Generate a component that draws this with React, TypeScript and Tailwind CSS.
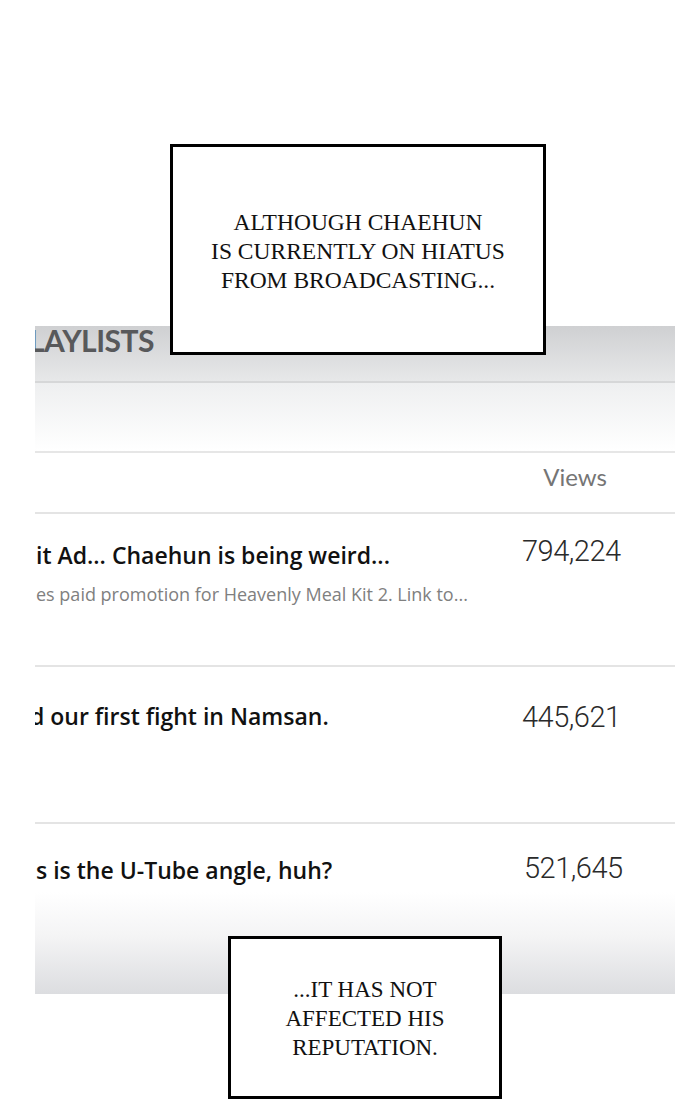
import React from "react";

const sans = { fontFamily: "'Open Sans', Lato, sans-serif" };
const roboto = { fontFamily: "Roboto, sans-serif" };
const serif = { fontFamily: "'Liberation Serif', 'Times New Roman', serif" };

export default function App() {
  return (
    <div className="relative w-[700px] h-[1120px] bg-white overflow-hidden" style={sans}>
      {/* Panel */}
      <div className="ml-[35px] mt-[326px] w-[640px] flex flex-col overflow-hidden">
        {/* Header */}
        <div className="h-[55px] bg-[linear-gradient(to_bottom,#cfd0d2,#e7e8e9)] overflow-hidden">
          <div
            className="ml-[-6px] mt-[-3px] text-[30px] leading-[34px] font-bold text-[#58595b] tracking-[-0.5px]"
            style={{ fontFamily: "Lato, sans-serif" }}
          >
            LAYLISTS
          </div>
        </div>
        <div className="h-[2px] bg-[#d6d7d8]" />
        <div className="h-[68px] bg-[linear-gradient(to_bottom,#eeeff0,#ffffff)]" />
        <div className="h-[2px] bg-[#e6e6e6]" />
        {/* Views header */}
        <div className="h-[59px] flex items-center justify-end pr-[68px]">
          <span className="text-[24px] leading-none text-[#757575] pb-[12px]" style={{ fontFamily: "Lato, sans-serif" }}>
            Views
          </span>
        </div>
        <div className="h-[2px] bg-[#e4e4e4]" />
        {/* Row 1 */}
        <div className="h-[151px] flex overflow-hidden">
          <div className="flex-1 pt-[26px] overflow-hidden">
            <div className="text-[23px] leading-[30px] font-semibold text-[#111] ml-[1px]">
              it Ad... Chaehun is being weird...
            </div>
            <div className="mt-[12px] text-[18px] leading-[24px] text-[#808080] ml-[1px]">
              es paid promotion for Heavenly Meal Kit 2. Link to...
            </div>
          </div>
          <div className="w-[153px] pt-[19px] text-[29px] leading-[36px] font-light text-[#2a2a2a] tracking-[-0.5px]" style={roboto}>
            794,224
          </div>
        </div>
        <div className="h-[2px] bg-[#e4e4e4]" />
        {/* Row 2 */}
        <div className="h-[155px] flex overflow-hidden">
          <div className="flex-1 pt-[34px] overflow-hidden">
            <div className="text-[23px] leading-[30px] font-semibold text-[#111] ml-[-5px]">
              d our first fight in Namsan.
            </div>
          </div>
          <div className="w-[153px] pt-[32px] text-[29px] leading-[36px] font-light text-[#2a2a2a] tracking-[-0.5px]" style={roboto}>
            445,621
          </div>
        </div>
        <div className="h-[2px] bg-[#e4e4e4]" />
        {/* Row 3 */}
        <div className="h-[170px] flex bg-[linear-gradient(to_bottom,#ffffff_0%,#ffffff_40%,#f4f4f5_66%,#dcdde0_100%)]">
          <div className="flex-1 pt-[31px] overflow-hidden">
            <div className="text-[23px] leading-[30px] font-semibold text-[#111] ml-[1px]">
              s is the U-Tube angle, huh?
            </div>
          </div>
          <div className="w-[151px] pt-[26px] text-[29px] leading-[36px] font-light text-[#2a2a2a] tracking-[-0.5px]" style={roboto}>
            521,645
          </div>
        </div>
      </div>

      {/* Caption box 1 */}
      <div
        className="absolute left-[170px] top-[144px] w-[376px] h-[211px] border-[3px] border-black bg-white flex flex-col items-center justify-center text-center text-[23.5px] leading-[29px] text-[#111]"
        style={serif}
      >
        <div className="pt-[4px]">ALTHOUGH CHAEHUN</div>
        <div>IS CURRENTLY ON HIATUS</div>
        <div>FROM BROADCASTING...</div>
      </div>

      {/* Caption box 2 */}
      <div
        className="absolute left-[228px] top-[936px] w-[274px] h-[163px] border-[3px] border-black bg-white flex flex-col items-center justify-center text-center text-[23px] leading-[29px] text-[#111]"
        style={serif}
      >
        <div className="pt-[2px]">...IT HAS NOT</div>
        <div>AFFECTED HIS</div>
        <div>REPUTATION.</div>
      </div>
    </div>
  );
}
